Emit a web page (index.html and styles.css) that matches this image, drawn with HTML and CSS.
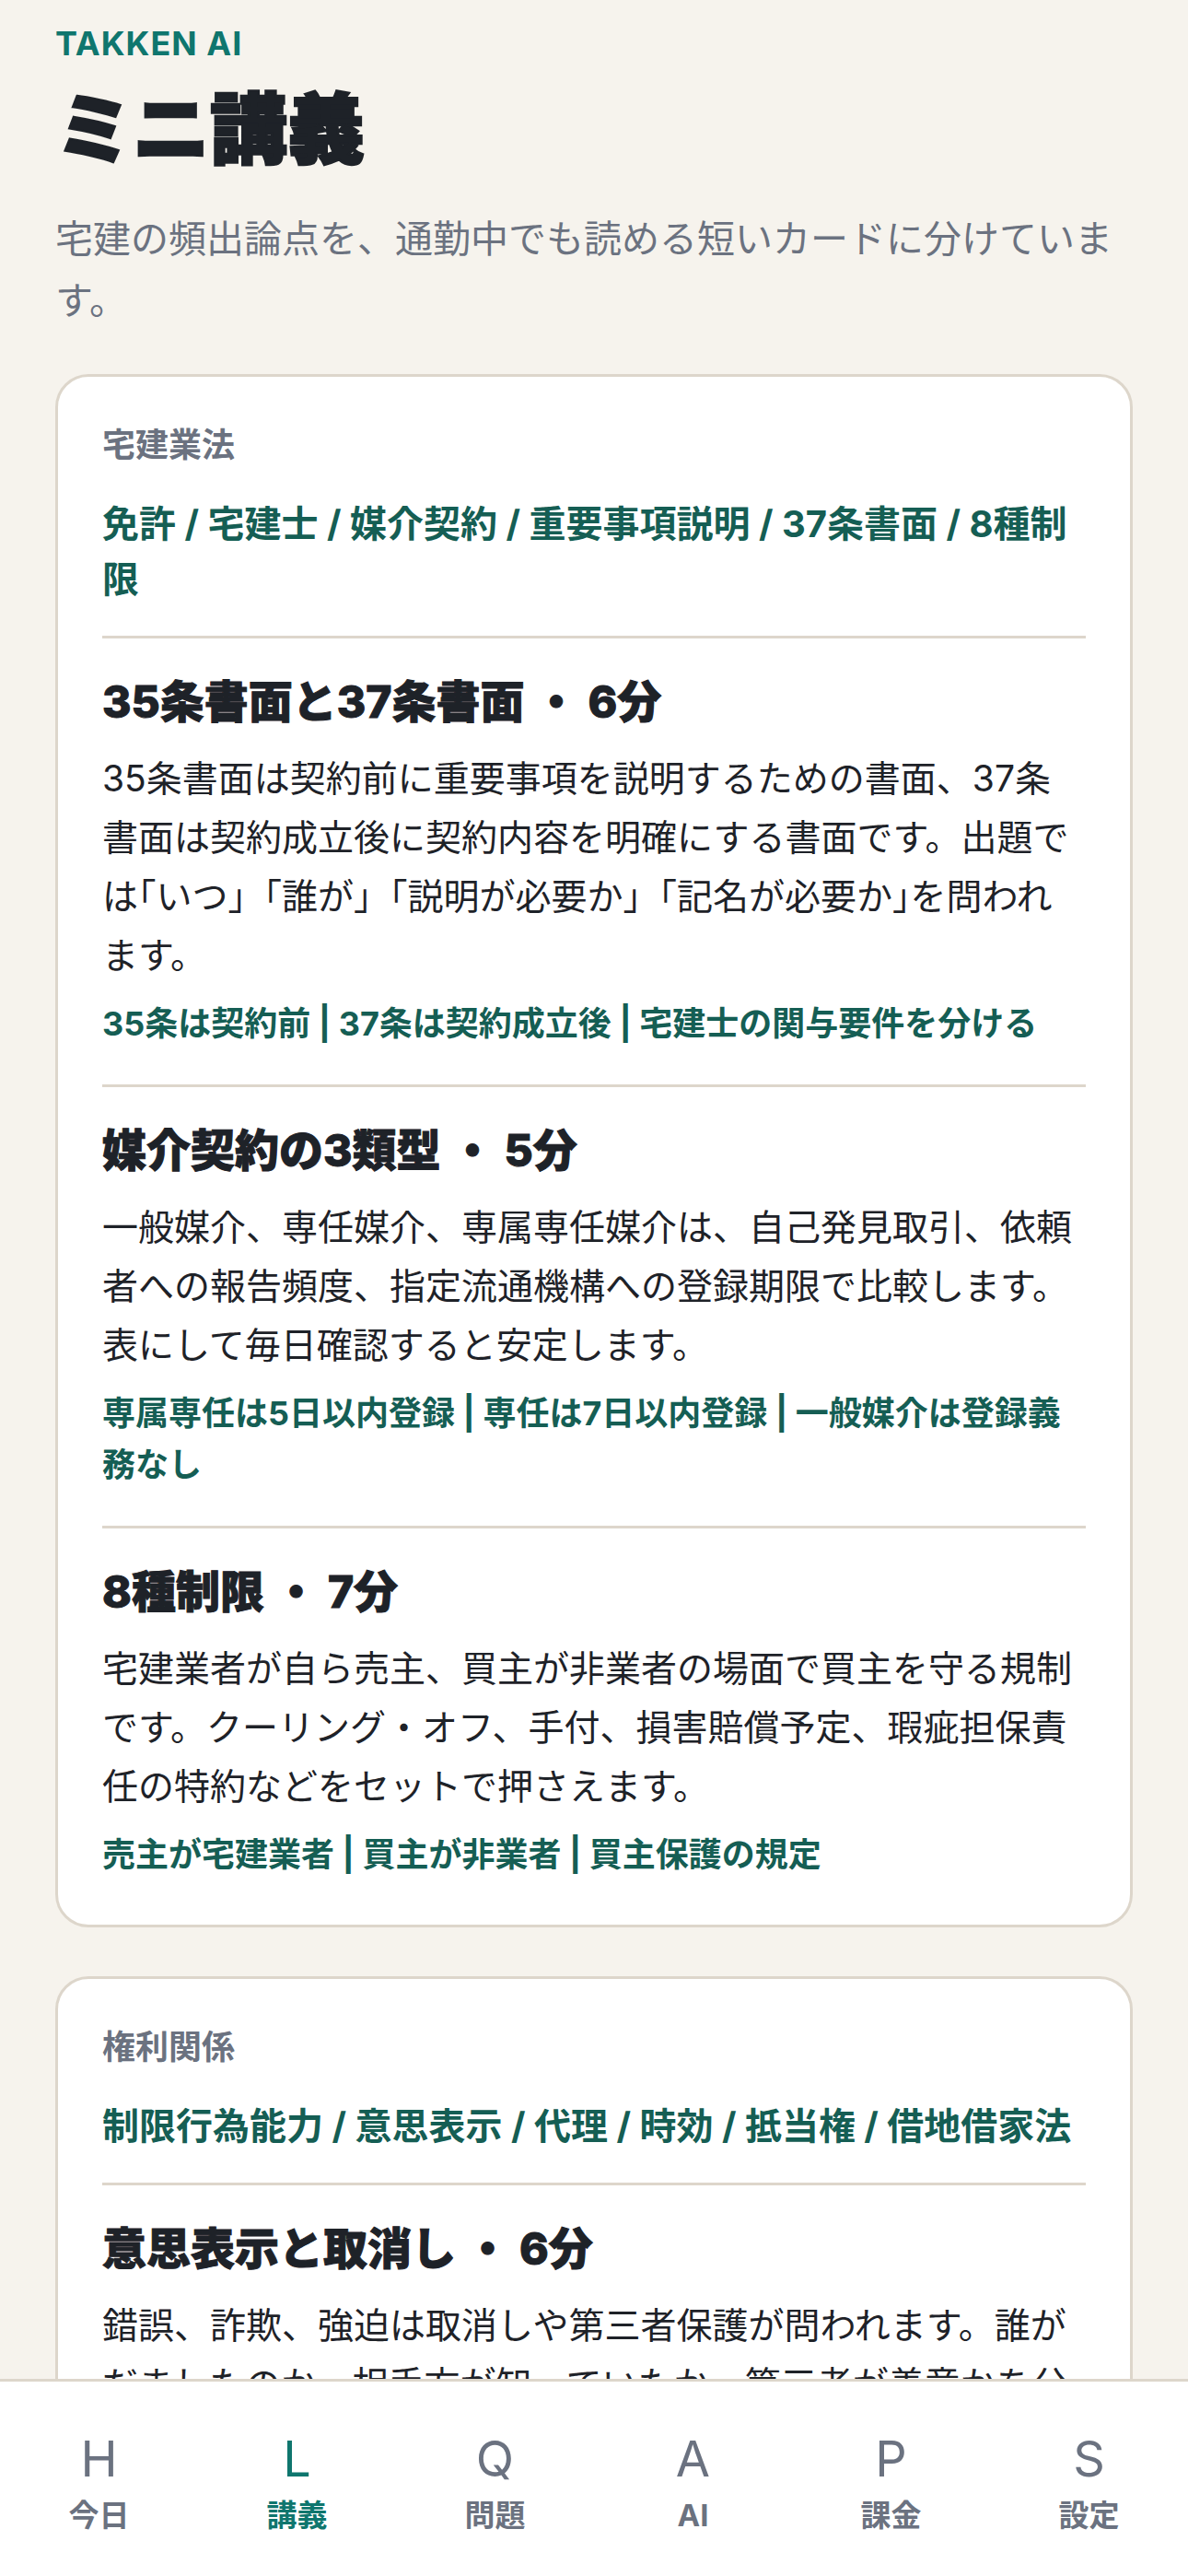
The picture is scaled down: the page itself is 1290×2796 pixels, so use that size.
FILE: index.html
```html
<!DOCTYPE html>
<html lang="ja">
<head>
<meta charset="utf-8">
<title>ミニ講義</title>
<link rel="stylesheet" href="styles.css">
</head>
<body>
<main class="page">
  <header class="page-head">
    <div class="brand">TAKKEN AI</div>
    <h1 class="page-title">ミニ講義</h1>
    <p class="lead">宅建の頻出論点を、通勤中でも読める短いカードに分けています。</p>
  </header>

  <section class="card">
    <div class="card-head">
      <div class="card-label">宅建業法</div>
      <div class="card-topics">免許 / 宅建士 / 媒介契約 / 重要事項説明 / 37条書面 / 8種制限</div>
    </div>
    <article class="lesson">
      <h2 class="lesson-title">35条書面と37条書面 ・ 6分</h2>
      <p class="lesson-body">35条書面は契約前に重要事項を説明するための書面、37条書面は契約成立後に契約内容を明確にする書面です。出題では<span class="punct-half">「</span>いつ」「誰が」「説明が必要か」「記名が必要か<span class="punct-half">」</span>を問われます。</p>
      <p class="lesson-tags">35条は契約前 | 37条は契約成立後 | 宅建士の関与要件を分ける</p>
    </article>
    <article class="lesson">
      <h2 class="lesson-title">媒介契約の3類型 ・ 5分</h2>
      <p class="lesson-body">一般媒介、専任媒介、専属専任媒介は、自己発見取引、依頼者への報告頻度、指定流通機構への登録期限で比較します。表にして毎日確認すると安定します。</p>
      <p class="lesson-tags">専属専任は5日以内登録 | 専任は7日以内登録 | 一般媒介は登録義務なし</p>
    </article>
    <article class="lesson">
      <h2 class="lesson-title">8種制限 ・ 7分</h2>
      <p class="lesson-body">宅建業者が自ら売主、買主が非業者の場面で買主を守る規制です。クーリング・オフ、手付、損害賠償予定、瑕疵担保責任の特約などをセットで押さえます。</p>
      <p class="lesson-tags">売主が宅建業者 | 買主が非業者 | 買主保護の規定</p>
    </article>
  </section>

  <section class="card">
    <div class="card-head">
      <div class="card-label">権利関係</div>
      <div class="card-topics">制限行為能力 / 意思表示 / 代理 / 時効 / 抵当権 / 借地借家法</div>
    </div>
    <article class="lesson">
      <h2 class="lesson-title">意思表示と取消し ・ 6分</h2>
      <p class="lesson-body">錯誤、詐欺、強迫は取消しや第三者保護が問われます。誰がだましたのか、相手方が知っていたか、第三者が善意かを分けて整理します。</p>
      <p class="lesson-tags">詐欺は善意無過失の第三者に対抗不可 | 強迫は対抗可</p>
    </article>
  </section>
</main>

<nav class="tabbar">
  <a class="tab"><span class="tab-key">H</span><span class="tab-label">今日</span></a>
  <a class="tab is-active"><span class="tab-key">L</span><span class="tab-label">講義</span></a>
  <a class="tab"><span class="tab-key">Q</span><span class="tab-label">問題</span></a>
  <a class="tab"><span class="tab-key">A</span><span class="tab-label">AI</span></a>
  <a class="tab"><span class="tab-key">P</span><span class="tab-label">課金</span></a>
  <a class="tab"><span class="tab-key">S</span><span class="tab-label">設定</span></a>
</nav>
</body>
</html>
```

FILE: styles.css
```css
html, body {
  margin: 0;
  padding: 0;
}

html {
  scrollbar-width: none;
}

html::-webkit-scrollbar {
  display: none;
}

body {
  background: #f6f3ed;
  color: #1e2228;
  font-family: Inter, "Noto Sans CJK JP", "Noto Sans", sans-serif;
}

.page {
  padding: 25px 60px 400px;
}

.brand {
  font-size: 36px;
  line-height: 44px;
  font-weight: 700;
  letter-spacing: 1px;
  color: #0f766e;
}

.page-title {
  margin: 22px 0 0;
  font-size: 84px;
  line-height: 100px;
  font-weight: 900;
  color: #1e2228;
  -webkit-text-stroke: 2.5px #1e2228;
}

.lead {
  margin: 35px 0 0;
  font-size: 41px;
  line-height: 67px;
  color: #6b7280;
}

.card {
  margin-top: 46px;
  background: #ffffff;
  border: 3px solid #ddd6cb;
  border-radius: 36px;
  padding: 48px;
}

.card + .card {
  margin-top: 53px;
}

.card-label {
  font-size: 36px;
  line-height: 52px;
  font-weight: 700;
  color: #6b7280;
}

.card-topics {
  margin-top: 30px;
  font-size: 40px;
  line-height: 60px;
  font-weight: 700;
  color: #155e54;
}

.lesson {
  border-top: 3px solid #ddd6cb;
  margin-top: 31px;
  padding-top: 38px;
}

.lesson + .lesson {
  margin-top: 38px;
}

.lesson-title {
  margin: 0;
  font-size: 48px;
  line-height: 62px;
  font-weight: 800;
  color: #1e2228;
  -webkit-text-stroke: 1px #1e2228;
}

.lesson-body {
  margin: 20px 0 0;
  font-size: 39px;
  line-height: 64px;
  font-weight: 400;
}

.punct-half {
  font-feature-settings: "halt";
}

.lesson-tags {
  margin: 14px 0 0;
  font-size: 36px;
  line-height: 56px;
  font-weight: 700;
  color: #155e54;
}

.tabbar {
  position: fixed;
  left: 0;
  right: 0;
  bottom: 0;
  height: 214px;
  box-sizing: border-box;
  padding-top: 54px;
  background: #ffffff;
  border-top: 3px solid #ddd6cb;
  display: grid;
  grid-template-columns: repeat(6, 1fr);
}

.tab {
  display: flex;
  flex-direction: column;
  align-items: center;
  color: #6b7280;
  text-decoration: none;
}

.tab.is-active {
  color: #0f766e;
}

.tab-key {
  font-size: 54px;
  line-height: 60px;
  font-weight: 400;
}

.tab-label {
  margin-top: 9px;
  font-size: 33px;
  line-height: 44px;
  font-weight: 700;
}
```
